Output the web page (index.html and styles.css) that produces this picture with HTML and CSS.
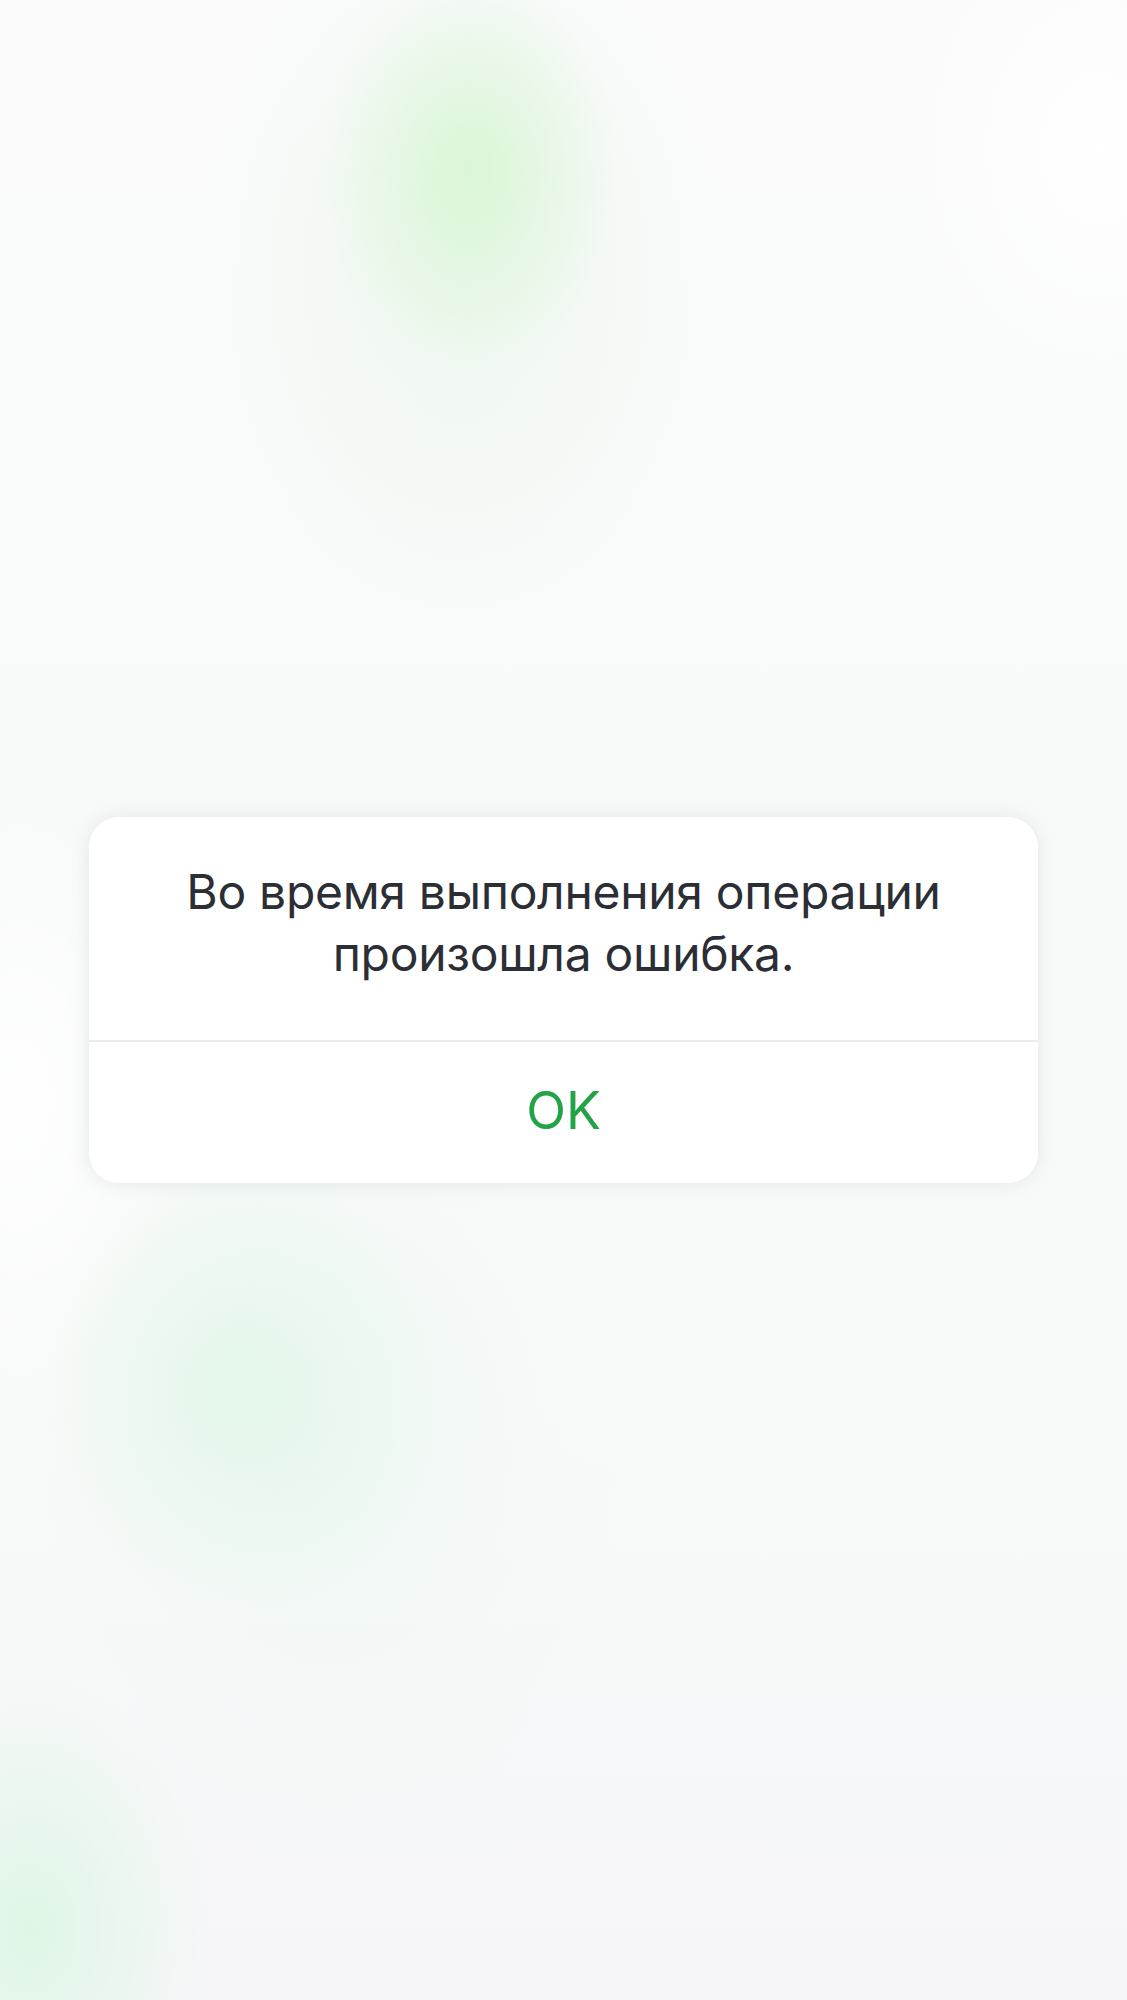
FILE: index.html
```html
<!DOCTYPE html>
<html lang="ru">
<head>
<meta charset="utf-8">
<title>Ошибка</title>
<link rel="stylesheet" href="styles.css">
</head>
<body>
<div class="screen">
  <div class="alert" role="alertdialog">
    <div class="alert-message">Во время выполнения операции<br>произошла ошибка.</div>
    <div class="alert-actions">
      <button class="alert-button" type="button">OK</button>
    </div>
  </div>
</div>
</body>
</html>
```
FILE: styles.css
```css
html, body {
  margin: 0;
  padding: 0;
}

body {
  font-family: Inter, "Noto Sans", "Liberation Sans", sans-serif;
  background: #f9fafa;
}

.screen {
  height: 2000px;
  display: flex;
  align-items: center;
  justify-content: center;
  background:
    radial-gradient(ellipse 150px 200px at 470px 170px, rgba(214, 245, 210, 0.85), rgba(214, 245, 210, 0) 100%),
    radial-gradient(ellipse 260px 360px at 460px 260px, rgba(232, 246, 232, 0.7), rgba(232, 246, 232, 0) 100%),
    radial-gradient(ellipse 200px 220px at 240px 1390px, rgba(224, 246, 230, 0.8), rgba(224, 246, 230, 0) 100%),
    radial-gradient(ellipse 300px 400px at 330px 1450px, rgba(236, 248, 242, 0.7), rgba(236, 248, 242, 0) 100%),
    radial-gradient(ellipse 180px 260px at 30px 1930px, rgba(220, 246, 228, 0.9), rgba(220, 246, 228, 0) 100%),
    radial-gradient(ellipse 200px 260px at 1100px 150px, rgba(255, 255, 255, 0.9), rgba(255, 255, 255, 0) 100%),
    radial-gradient(ellipse 160px 300px at 20px 1100px, rgba(255, 255, 255, 0.9), rgba(255, 255, 255, 0) 100%),
    linear-gradient(180deg, #fbfbfc 0%, #f8faf9 40%, #f8faf9 70%, #f6f6f8 100%);
}

.alert {
  width: 949px;
  background: #ffffff;
  border-radius: 30px;
  box-shadow: 0 0 18px rgba(180, 195, 190, 0.35);
  overflow: hidden;
}

.alert-message {
  padding: 44px 40px 55px;
  font-size: 48px;
  line-height: 62px;
  color: #2b2e34;
  text-align: center;
  letter-spacing: -0.3px;
}

.alert-actions {
  border-top: 2px solid #ececec;
  height: 141px;
  display: flex;
  align-items: center;
  justify-content: center;
}

.alert-button {
  font-family: inherit;
  font-size: 52px;
  line-height: 1;
  color: #21a346;
  background: none;
  border: none;
  padding: 0;
  margin-top: -4px;
}
```
